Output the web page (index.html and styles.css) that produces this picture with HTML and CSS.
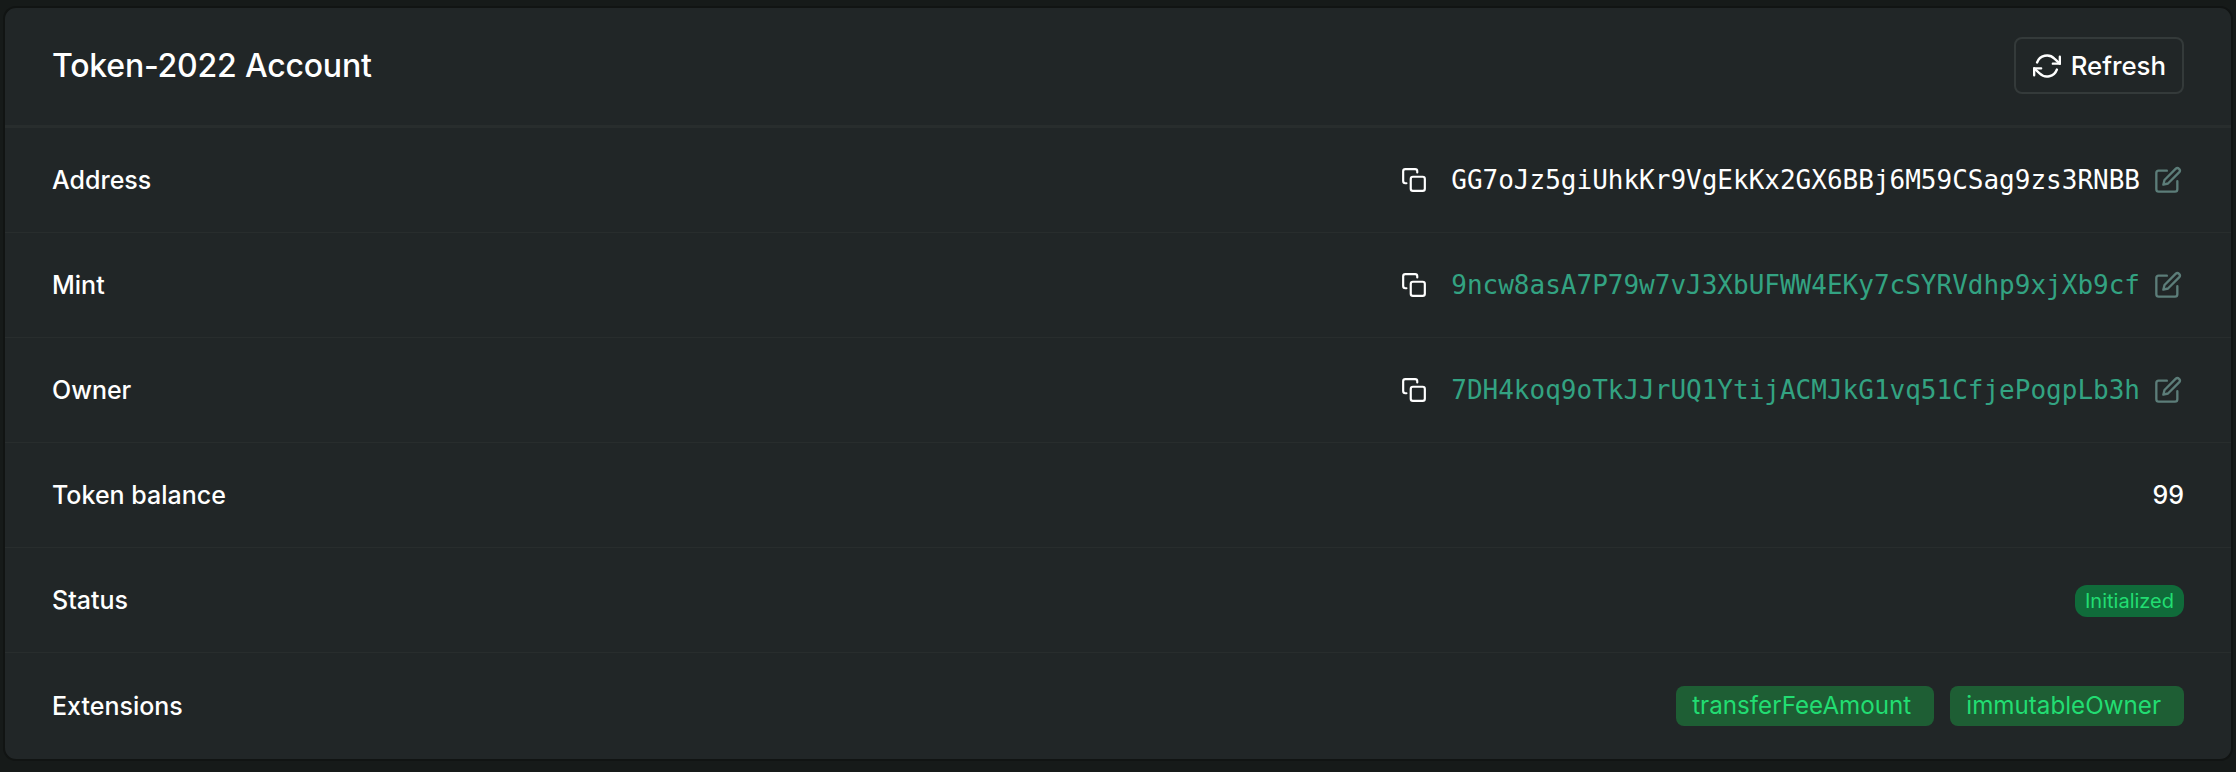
FILE: index.html
```html
<!DOCTYPE html>
<html lang="en">
  <head>
    <meta charset="utf-8" />
    <title>Token-2022 Account</title>
    <meta name="viewport" content="width=device-width, initial-scale=1" />
    <link rel="stylesheet" href="styles.css">
  </head>
  <body>
    <svg class="sprites" width="0" height="0">
      <symbol id="copy" viewBox="0 0 24 24">
        <rect x="9" y="9" width="13" height="13" rx="2" ry="2"></rect>
        <path d="M5 15H4a2 2 0 0 1-2-2V4a2 2 0 0 1 2-2h9a2 2 0 0 1 2 2v1"></path>
      </symbol>
      <symbol id="edit" viewBox="0 0 24 24">
        <path d="M11 4H4a2 2 0 0 0-2 2v14a2 2 0 0 0 2 2h14a2 2 0 0 0 2-2v-7"></path>
        <path d="M18.5 2.5a2.121 2.121 0 0 1 3 3L12 15l-4 1 1-4 9.5-9.5z"></path>
      </symbol>
    </svg>

    <div class="card">
      <div class="card-header">
        <h3>Token-2022 Account</h3>
        <button class="btn">
          <svg class="icon refresh" viewBox="0 0 24 24">
            <polyline points="23 4 23 10 17 10"></polyline>
            <polyline points="1 20 1 14 7 14"></polyline>
            <path d="M3.51 9a9 9 0 0 1 14.85-3.36L23 10M1 14l4.64 4.36A9 9 0 0 0 20.49 15"></path>
          </svg>
          Refresh
        </button>
      </div>

      <div class="row">
        <div>Address</div>
        <div class="value">
          <svg class="icon copy"><use href="#copy"></use></svg>
          <span class="mono">GG7oJz5giUhkKr9VgEkKx2GX6BBj6M59CSag9zs3RNBB</span>
          <svg class="icon edit"><use href="#edit"></use></svg>
        </div>
      </div>
      <div class="row">
        <div>Mint</div>
        <div class="value">
          <svg class="icon copy"><use href="#copy"></use></svg>
          <span class="mono link">9ncw8asA7P79w7vJ3XbUFWW4EKy7cSYRVdhp9xjXb9cf</span>
          <svg class="icon edit"><use href="#edit"></use></svg>
        </div>
      </div>
      <div class="row">
        <div>Owner</div>
        <div class="value">
          <svg class="icon copy"><use href="#copy"></use></svg>
          <span class="mono link">7DH4koq9oTkJJrUQ1YtijACMJkG1vq51CfjePogpLb3h</span>
          <svg class="icon edit"><use href="#edit"></use></svg>
        </div>
      </div>
      <div class="row">
        <div>Token balance</div>
        <div class="value">99</div>
      </div>
      <div class="row">
        <div>Status</div>
        <div class="value"><span class="badge-pill">Initialized</span></div>
      </div>
      <div class="row">
        <div>Extensions</div>
        <div class="value tags">
          <span class="badge">transferFeeAmount</span>
          <span class="badge">immutableOwner</span>
        </div>
      </div>
    </div>
  </body>
</html>
```

FILE: styles.css
```css
body {
  background: #161a19;
  font-family: Inter, sans-serif;
  margin: 0;
  padding: 6px 3px 10px 3px;
  color: #fff;
  font-size: 25px;
  font-weight: 450;
}
.sprites {
  position: absolute;
}
.card {
  background: #212627;
  border: 2px solid #111413;
  border-radius: 13px;
}
.card-header {
  display: flex;
  align-items: center;
  justify-content: space-between;
  height: 115px;
  padding: 0 47px 2px;
  border-bottom: 3px solid #282d2d;
}
.card-header h3 {
  margin: 0;
  font-size: 32px;
  font-weight: 450;
  letter-spacing: -0.2px;
}
.btn {
  display: flex;
  align-items: center;
  gap: 10px;
  height: 57px;
  padding: 0 16px 0 17px;
  background: none;
  border: 2px solid #343a3a;
  border-radius: 8px;
  color: #fff;
  font-family: inherit;
  font-size: 25.8px;
  font-weight: 450;
}
.icon {
  width: 26px;
  height: 26px;
  fill: none;
  stroke: currentColor;
  stroke-width: 2;
  stroke-linecap: round;
  stroke-linejoin: round;
}
.refresh {
  width: 28px;
  height: 28px;
}
.row {
  display: flex;
  align-items: center;
  justify-content: space-between;
  height: 104px;
  padding: 0 47px;
  border-top: 1px solid #282d2d;
}
.row:last-child {
  height: 106px;
}
.card-header + .row {
  border-top: 0;
}
.value {
  display: flex;
  align-items: center;
}
.mono {
  font-family: "DejaVu Sans Mono", monospace;
  font-size: 26px;
  font-weight: 400;
  margin: 0 14px 0 24px;
}
.link {
  color: #33a382;
}
.edit {
  width: 28px;
  height: 28px;
  margin-right: 2px;
  color: #5c7d79;
}
.badge-pill {
  background: #106b3a;
  color: #22dd72;
  font-size: 20px;
  font-weight: 400;
  line-height: 32px;
  margin-top: 2px;
  padding: 0 10px;
  border-radius: 12px;
}
.tags {
  gap: 16px;
}
.badge {
  background: #1e5e34;
  color: #22dd72;
  font-size: 24.2px;
  font-weight: 400;
  line-height: 40px;
  padding: 0 23px 0 16px;
  border-radius: 8px;
}
```
